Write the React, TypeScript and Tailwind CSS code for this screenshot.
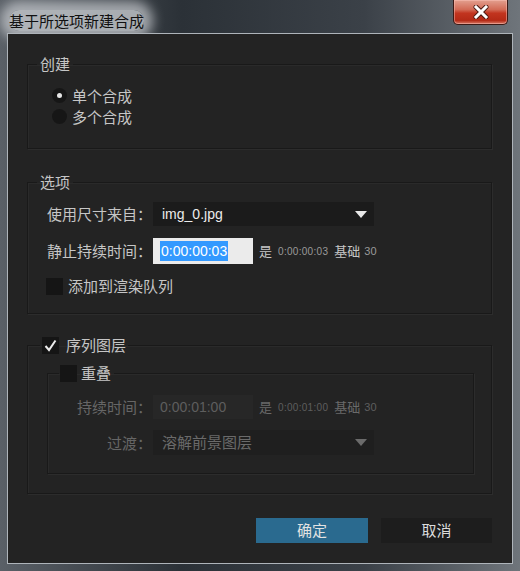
import { useState } from "react";

const cjk = "font-['Microsoft_YaHei','Noto_Sans_CJK_SC',sans-serif]";
const latin = "font-['Liberation_Sans','Noto_Sans_CJK_SC',sans-serif]";

function Radio({ checked, label }: { checked?: boolean; label: string }) {
  return (
    <div className="flex items-center h-[21px]">
      <span className="w-[15px] h-[15px] rounded-full bg-[#161616] flex items-center justify-center">
        {checked && <span className="w-[5px] h-[5px] rounded-full bg-[#e6e6e6]" />}
      </span>
      <span className="ml-[5px] text-[15px] leading-[20px] text-[#c6c6c6]">{label}</span>
    </div>
  );
}

function Check({ checked }: { checked?: boolean }) {
  return (
    <span className="w-[17px] h-[17px] bg-[#151515] flex items-center justify-center shrink-0">
      {checked && (
        <svg width="13" height="13" viewBox="0 0 13 13">
          <path d="M1.5 7 L5 11 L11.5 1.5" fill="none" stroke="#ececec" strokeWidth="2" />
        </svg>
      )}
    </span>
  );
}

function Caret({ dim }: { dim?: boolean }) {
  return (
    <svg width="12" height="7" viewBox="0 0 12 7">
      <path d="M0 0 H12 L6 7 Z" fill={dim ? "#6b6b6b" : "#e8e8e8"} />
    </svg>
  );
}

const groupBox = "border border-[#191919] shadow-[1px_1px_0_#2c2c2c,inset_1px_1px_0_#2a2a2a] min-w-0";

export default function App() {
  const [mode] = useState("single");

  return (
    <div className={`w-[520px] h-[571px] flex flex-col bg-[linear-gradient(to_right,#5a6067,#2b3137_35%,#3b4148_70%,#6f757b)] ${cjk}`}>
      {/* title bar */}
      <div className="h-[33px] flex items-start justify-between shrink-0">
        <div className="pl-[9px] pt-[8px]">
          <span className="bg-[rgba(206,210,214,0.75)] shadow-[0_0_12px_9px_rgba(206,210,214,0.7)] rounded-[10px] text-[15px] leading-[20px] text-[#111]">
            基于所选项新建合成
          </span>
        </div>
        <div className="mr-[12px] w-[55px] h-[25px] rounded-b-[5px] border border-t-0 border-[#3b1a16] bg-[linear-gradient(to_bottom,#e3a08f,#d26a55_40%,#c2341f_55%,#b42a16_85%,#d87a66)] shadow-[inset_0_0_0_1px_rgba(255,200,190,0.45)] flex items-center justify-center">
          <svg width="16" height="14" viewBox="0 0 16 14">
            <path d="M3 2 L13 12 M13 2 L3 12" stroke="#4a1a12" strokeWidth="5" strokeLinecap="round" />
            <path d="M3 2 L13 12 M13 2 L3 12" stroke="#ffffff" strokeWidth="3" strokeLinecap="square" />
          </svg>
        </div>
      </div>

      {/* client area */}
      <div className="flex-1 mx-[7px] mb-[7px] border border-[#aeb4ba] bg-[#232323] pl-[19px] pr-[20px] pt-[20px] flex flex-col">
        {/* 创建 */}
        <fieldset className={`${groupBox} pb-[21px]`}>
          <legend className="ml-[9px] px-[3px] text-[15px] leading-[20px] text-[#c6c6c6]">创建</legend>
          <div className="mt-[11px] pl-[24px] flex flex-col">
            <Radio checked={mode === "single"} label="单个合成" />
            <Radio checked={mode === "multi"} label="多个合成" />
          </div>
        </fieldset>

        {/* 选项 */}
        <fieldset className={`${groupBox} mt-[23px] pb-[17px]`}>
          <legend className="ml-[9px] px-[3px] text-[15px] leading-[20px] text-[#c6c6c6]">选项</legend>
          <div className="mt-[10px] flex items-center">
            <span className="w-[124px] text-right text-[15px] leading-[20px] text-[#c6c6c6] whitespace-nowrap">使用尺寸来自：</span>
            <div className="ml-[1px] w-[221px] h-[24px] bg-[#1b1b1b] flex items-center justify-between pl-[9px] pr-[7px]">
              <span className={`${latin} text-[14px] text-[#ececec]`}>img_0.jpg</span>
              <Caret />
            </div>
          </div>
          <div className="mt-[12px] flex items-center">
            <span className="w-[124px] text-right text-[15px] leading-[20px] text-[#c6c6c6] whitespace-nowrap">静止持续时间：</span>
            <div className="ml-[1px] w-[100px] h-[26px] bg-[#ebebeb] flex items-center pl-[7px]">
              <span className={`${latin} text-[14px] leading-[20px] bg-[#3399ff] text-white px-[1px]`}>0:00:00:03</span>
            </div>
            <span className="ml-[6px] text-[13px] text-[#c6c6c6]">是</span>
            <span className={`${latin} ml-[6px] text-[10px] text-[#9a9a9a] tracking-[0.3px]`}>0:00:00:03</span>
            <span className="ml-[6px] text-[13px] text-[#c6c6c6]">基础</span>
            <span className={`${latin} ml-[4px] text-[11px] text-[#9a9a9a]`}>30</span>
          </div>
          <div className="mt-[12px] ml-[18px] flex items-center">
            <Check />
            <span className="ml-[5px] text-[15px] leading-[20px] text-[#c6c6c6]">添加到渲染队列</span>
          </div>
        </fieldset>

        {/* 序列图层 */}
        <fieldset className={`${groupBox} mt-[21px] pb-[19px]`}>
          <legend className="ml-[12px] px-[2px] flex items-center h-[20px]">
            <Check checked />
            <span className="ml-[7px] text-[15px] leading-[20px] text-[#c6c6c6]">序列图层</span>
          </legend>
          <fieldset className={`${groupBox} mt-[8px] ml-[19px] mr-[17px] pb-[18px]`}>
            <legend className="ml-[11px] px-[1px] flex items-center h-[20px]">
              <Check />
              <span className="ml-[4px] pr-[2px] text-[15px] leading-[20px] text-[#c6c6c6]">重叠</span>
            </legend>
            <div className="mt-[12px] flex items-center">
              <span className="w-[104px] text-right text-[15px] leading-[20px] text-[#666] whitespace-nowrap">持续时间：</span>
              <div className="ml-[1px] w-[100px] h-[24px] bg-[#272727] flex items-center pl-[7px]">
                <span className={`${latin} text-[14px] text-[#5e5e5e]`}>0:00:01:00</span>
              </div>
              <span className="ml-[6px] text-[13px] text-[#6a6a6a]">是</span>
              <span className={`${latin} ml-[6px] text-[10px] text-[#5e5e5e] tracking-[0.3px]`}>0:00:01:00</span>
              <span className="ml-[6px] text-[13px] text-[#6a6a6a]">基础</span>
              <span className={`${latin} ml-[4px] text-[11px] text-[#5e5e5e]`}>30</span>
            </div>
            <div className="mt-[11px] flex items-center">
              <span className="w-[104px] text-right text-[15px] leading-[20px] text-[#666] whitespace-nowrap">过渡：</span>
              <div className="ml-[1px] w-[221px] h-[25px] bg-[#1f1f1f] flex items-center justify-between pl-[9px] pr-[7px]">
                <span className="text-[15px] text-[#6a6a6a]">溶解前景图层</span>
                <Caret dim />
              </div>
            </div>
          </fieldset>
        </fieldset>

        {/* buttons */}
        <div className="mt-[24px] flex justify-end gap-[13px]">
          <button className="w-[112px] h-[25px] bg-[#2a6a8f] text-[15px] text-[#e2e2e2]">确定</button>
          <button className="w-[111px] h-[25px] bg-[#1d1d1d] text-[15px] text-[#dcdcdc]">取消</button>
        </div>
      </div>
    </div>
  );
}
